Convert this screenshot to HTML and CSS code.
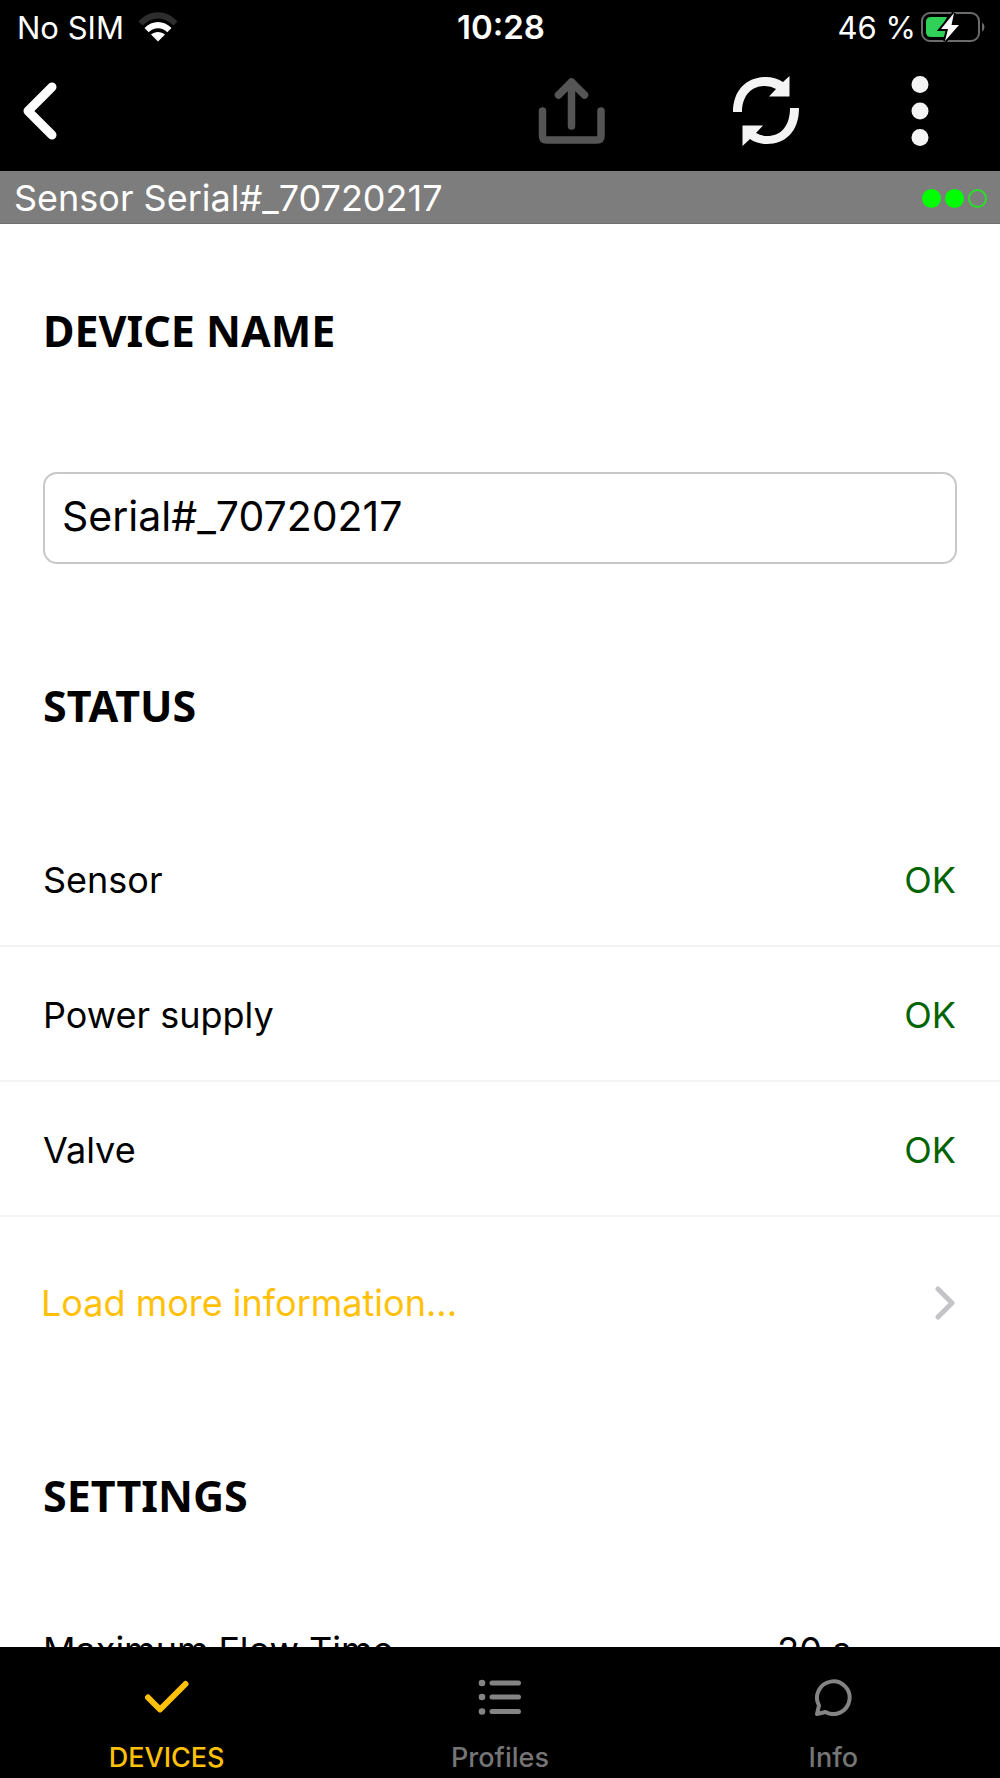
FILE: index.html
```html
<!DOCTYPE html>
<html lang="en">
<head>
<meta charset="utf-8">
<meta name="viewport" content="width=device-width, initial-scale=1">
<title>Device settings</title>
<link rel="stylesheet" href="styles.css">
</head>
<body>
<div class="app">
  <header class="top">
    <div class="statusbar">
      <div class="carrier">
        <span>No SIM</span>
        <svg class="wifi" width="40" height="30" viewBox="0 0 40 30" aria-hidden="true">
          <path d="M0.5 9.5C12-2.700 28-2.700 39.500 9.500L35.300 13.500C26 4 14 4 4.700 13.500Z" fill="#2d2d2d"/>
          <path d="M6.500 16C14 8 26 8 33.500 16L29.300 20.300C24 14.800 16 14.800 10.700 20.300Z" fill="#fff"/>
          <path d="M13 22.500C17 19 23 19 27 22.500L20 29.500Z" fill="#fff"/>
        </svg>
      </div>
      <time class="clock">10:28</time>
      <div class="battery">
        <span>46 %</span>
        <svg width="64" height="32" viewBox="0 0 64 32" aria-hidden="true">
          <rect x="1" y="2" width="57" height="28" rx="8" fill="none" stroke="#6b6b6b" stroke-width="2"/>
          <path d="M61 11.500Q63.500 13 63.500 16T61 20.500Z" fill="#6b6b6b"/>
          <path d="M10 6H26L19.500 19H25L24 26H10Q5 26 5 21V11Q5 6 10 6Z" fill="#30d158"/>
          <path d="M33 2L20 18H27L24 30L38 14H30.500Z" fill="#fff" stroke="#000" stroke-width="4" paint-order="stroke"/>
        </svg>
      </div>
    </div>
    <div class="toolbar">
      <button class="icon-button" type="button" aria-label="Back">
        <svg width="34" height="58" viewBox="0 0 34 58"><path d="M29 5L5 29L29 53" fill="none" stroke="#fff" stroke-width="9" stroke-linecap="round" stroke-linejoin="round"/></svg>
      </button>
      <div class="actions">
        <button class="icon-button share" type="button" aria-label="Share" disabled>
          <svg width="68" height="68" viewBox="0 0 68 68" fill="none" stroke="#555" stroke-width="7.500" stroke-linecap="round" stroke-linejoin="round"><path d="M4.500 34V59Q4.500 63 8.500 63H59Q63 63 63 59V34M33.500 49V5M20.500 18L33.500 5L46.500 18"/></svg>
        </button>
        <button class="icon-button refresh" type="button" aria-label="Refresh">
          <svg width="66" height="70" viewBox="0 0 66 70" fill="#f4f4f4"><path d="M0 36C0 14 14 1 33 1Q42 1 50 6L56.500 0V20.500H36L43 13Q38 10 32 10C18 10 9 20 9 36ZM66 32C66 56 52 68 34 68Q24 68 17 63L9.500 70V49.500H30L23 57Q28 60 34 60C48 60 57 50 57 32Z"/></svg>
        </button>
        <button class="icon-button" type="button" aria-label="More options">
          <svg width="18" height="70" viewBox="0 0 18 70" fill="#f4f4f4"><circle cx="9" cy="8.500" r="8.500"/><circle cx="9" cy="35" r="8.500"/><circle cx="9" cy="61.500" r="8.500"/></svg>
        </button>
      </div>
    </div>
  </header>
  <div class="device-bar">
    <span>Sensor Serial#_70720217</span>
    <div class="signal" role="img" aria-label="Signal 2 of 3"><i class="dot on"></i><i class="dot on"></i><i class="dot"></i></div>
  </div>
  <main class="content">
    <section>
      <h2 class="heading"><label for="name">DEVICE NAME</label></h2>
      <input class="name-input" id="name" type="text" value="Serial#_70720217">
    </section>
    <section>
      <h2 class="heading status-heading">STATUS</h2>
      <dl class="rows">
        <div class="row"><dt>Sensor</dt><dd class="ok">OK</dd></div>
        <div class="row"><dt>Power supply</dt><dd class="ok">OK</dd></div>
        <div class="row"><dt>Valve</dt><dd class="ok">OK</dd></div>
      </dl>
      <a class="more" href="#more">Load more information...
        <svg width="20" height="34" viewBox="0 0 20 34" aria-hidden="true"><path d="M3 3L17 17L3 31" fill="none" stroke="#c4c4c6" stroke-width="5" stroke-linecap="round" stroke-linejoin="round"/></svg>
      </a>
    </section>
    <section>
      <h2 class="heading settings-heading">SETTINGS</h2>
      <dl class="rows">
        <div class="row setting"><dt>Maximum Flow Time</dt><dd>20 s</dd></div>
      </dl>
    </section>
  </main>
  <nav class="tabs">
    <a class="tab active" href="#devices">
      <svg width="44" height="40" viewBox="0 0 44 40" fill="none" stroke="#ffc107" stroke-width="6" stroke-linecap="round" stroke-linejoin="round"><path d="M3 21.500L15 33.500L40.500 8"/></svg>
      DEVICES
    </a>
    <a class="tab" href="#profiles">
      <svg width="44" height="40" viewBox="0 0 44 40" fill="none" stroke="#848484" stroke-width="5" stroke-linecap="round"><path d="M14 7H40.500M14 21H40.500M14 35.500H40.500"/><g fill="#848484" stroke="none"><circle cx="4" cy="7" r="3.300"/><circle cx="4" cy="21" r="3.300"/><circle cx="4" cy="35.500" r="3.300"/></g></svg>
      Profiles
    </a>
    <a class="tab" href="#info">
      <svg width="44" height="40" viewBox="0 0 44 40" fill="none" stroke="#848484" stroke-width="4" stroke-linejoin="round"><path d="M6 38L8 29.500A16.300 16.300 0 1 1 14.500 36Z"/></svg>
      Info
    </a>
  </nav>
</div>
</body>
</html>
```
FILE: styles.css
```css
* { box-sizing: border-box; }

body {
  margin: 0;
  background: #fff;
  color: #000;
  font-family: Inter, "Liberation Sans", sans-serif;
  font-size: 36px;
}

svg { display: block; flex: none; }

.app {
  display: flex;
  flex-direction: column;
  height: 100vh;
}

.top {
  background: #000;
  color: #fff;
}

.statusbar {
  display: grid;
  grid-template-columns: 1fr auto 1fr;
  align-items: center;
  height: 54px;
  padding: 0 15px 0 17px;
  font-size: 31px;
}

.carrier, .battery {
  display: flex;
  align-items: center;
}

.carrier { gap: 14px; }
.battery { justify-content: flex-end; gap: 5px; }

.clock {
  font-size: 33px;
  font-weight: 600;
}

.toolbar {
  display: flex;
  align-items: center;
  justify-content: space-between;
  height: 117px;
  padding: 0 71px 4px 23px;
}

.actions { display: flex; align-items: center; }

.icon-button {
  padding: 0;
  border: 0;
  background: none;
}

.share { margin-right: 127px; }
.refresh { margin-right: 112px; }

.device-bar {
  display: flex;
  align-items: center;
  justify-content: space-between;
  height: 53px;
  padding: 2px 13px 0 14px;
  background: #7d7d7d;
  border-bottom: 1px solid #707070;
  color: #fff;
}

.signal { display: flex; gap: 4px; }

.dot {
  width: 19px;
  height: 19px;
  border: 2px solid #2bdc2b;
  border-radius: 50%;
}

.dot.on {
  border-color: #0f0;
  background: #0f0;
}

.content {
  flex: 1;
  min-height: 0;
  overflow: hidden;
}

.heading {
  margin: 0;
  padding: 80px 43px 114px;
  font-family: "Noto Sans", sans-serif;
  font-size: 43px;
  font-weight: 700;
  line-height: 54px;
}

.name-input {
  display: block;
  width: calc(100% - 86px);
  height: 92px;
  margin: 0 43px;
  padding: 0 17px 4px;
  border: 2px solid #c8c8c8;
  border-radius: 14px;
  background: #fff;
  color: #000;
  font: inherit;
  font-size: 41px;
}

.status-heading { padding: 115px 43px 79px; }

.rows { margin: 0; }

.row {
  display: flex;
  align-items: center;
  justify-content: space-between;
  height: 135px;
  padding: 3px 44px 0 43px;
  border-bottom: 2px solid #f4f4f4;
}

.row dd { margin: 0; }
.row .ok { color: #006400; }
.row.setting dd { margin-right: 105px; }

.more {
  display: flex;
  align-items: center;
  justify-content: space-between;
  height: 172px;
  padding: 0 45px 0 41px;
  color: #ffc107;
  text-decoration: none;
}

.settings-heading { padding: 80px 43px 59px; }

.tabs {
  display: grid;
  grid-template-columns: repeat(3, 1fr);
  height: 131px;
  background: #000;
}

.tab {
  display: flex;
  flex-direction: column;
  align-items: center;
  gap: 25px;
  padding-top: 29px;
  color: #757575;
  font-size: 27px;
  font-weight: 500;
  line-height: 34px;
  text-decoration: none;
}

.tab.active { color: #ffc107; }
```
